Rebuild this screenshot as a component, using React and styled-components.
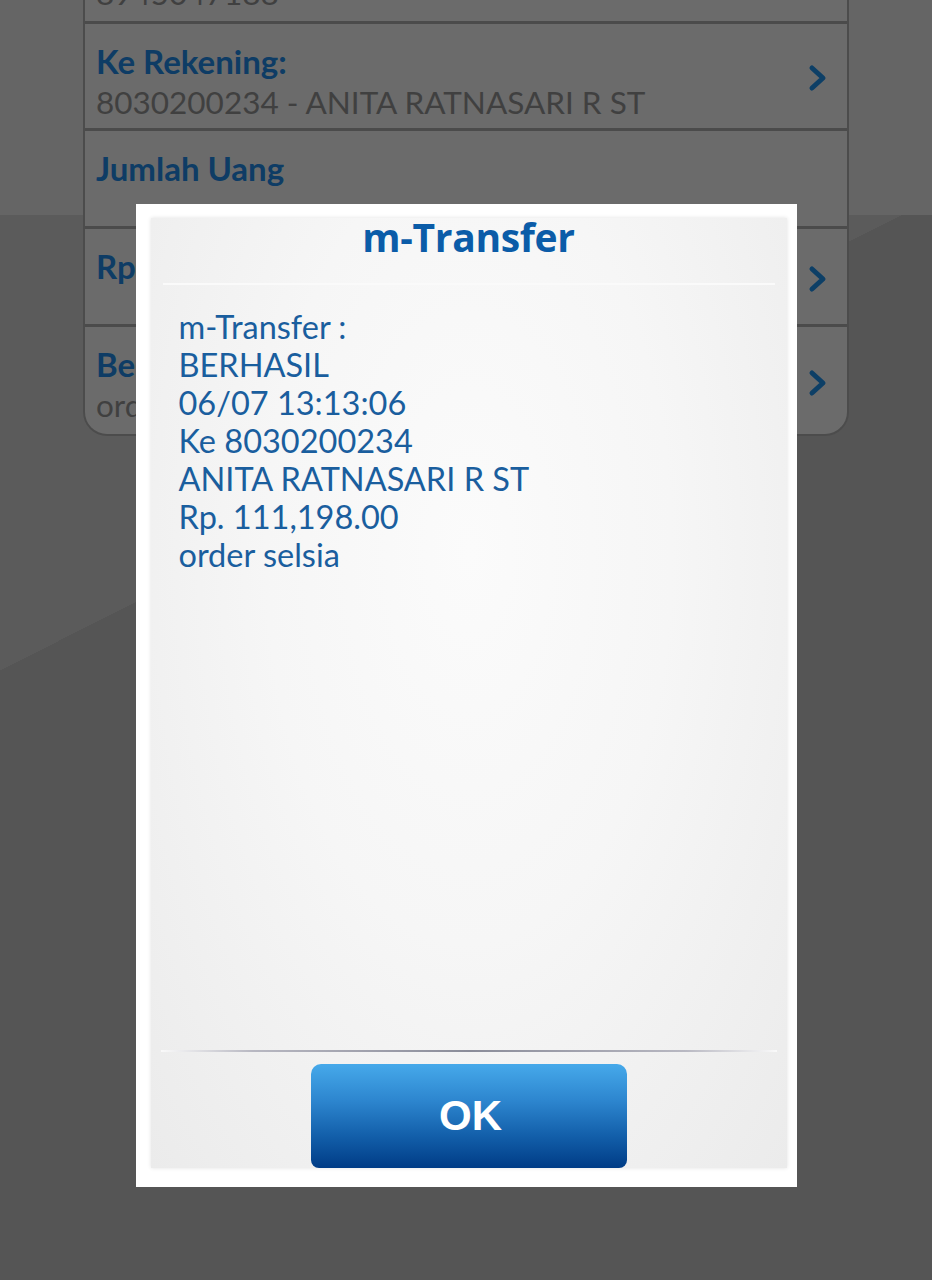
import React from 'react'
import styled, { createGlobalStyle } from 'styled-components'

const GlobalStyle = createGlobalStyle`
  html, body {
    margin: 0;
    padding: 0;
  }
  body {
    font-family: "Lato", "Liberation Sans", sans-serif;
  }
`

// baris form yang ada di belakang dialog
const rows = [
  { value: '8945047188', height: 106, top: true },
  { label: 'Ke Rekening:', value: '8030200234 - ANITA RATNASARI R ST', height: 107, arrow: true },
  { label: 'Jumlah Uang', height: 98 },
  { label: 'Rp', height: 98, arrow: true },
  { label: 'Berita', value: 'order selsia', height: 107, arrow: true, last: true },
]

const lines = [
  'm-Transfer :',
  'BERHASIL',
  '06/07 13:13:06',
  'Ke 8030200234',
  'ANITA RATNASARI R ST',
  'Rp. 111,198.00',
  'order selsia',
]

const Chevron = () => (
  <svg width="22" height="30" viewBox="0 0 22 30">
    <path d="M5 5 L16 15 L5 25" fill="none" stroke="#2196f3" strokeWidth="5" strokeLinecap="round" strokeLinejoin="round" />
  </svg>
)

const App = () => {
  return (
    <>
      <GlobalStyle />
      <Screen>
        <Card>
          {rows.map((r, i) => (
            <Row key={i} $h={r.height} $last={r.last} $top={r.top}>
              <RowText>
                {r.label && <Label>{r.label}</Label>}
                {r.value && <Value>{r.value}</Value>}
              </RowText>
              {r.arrow && <Arrow><Chevron /></Arrow>}
            </Row>
          ))}
        </Card>

        <Overlay>
          <Frame>
            <Panel>
              <Title>m-Transfer</Title>
              <Body>
                {lines.map((l, i) => (
                  <Line key={i}>{l}</Line>
                ))}
              </Body>
              <Footer>
                <OkButton>OK</OkButton>
              </Footer>
            </Panel>
          </Frame>
        </Overlay>
      </Screen>
    </>
  )
}

export default App

const Screen = styled.div`
  position: relative;
  width: 932px;
  height: 1280px;
  overflow: hidden;
  background:
    linear-gradient(180deg, #f0f0f0 0 215px, transparent 215px 100%),
    linear-gradient(153.2deg, #dadada 0 38.3%, #cacaca 38.3% 100%);
  padding: 0 83px;
  box-sizing: border-box;
`

const Card = styled.div`
  margin-top: -82px;
  background: #ffffff;
  border: 2px solid #b5b5b5;
  border-top: none;
  border-radius: 0 0 24px 24px;
  display: flex;
  flex-direction: column;
`

const Row = styled.div`
  height: ${p => p.$h}px;
  box-sizing: border-box;
  display: flex;
  justify-content: space-between;
  padding: ${p => (p.$top ? '0 18px 9px 11px' : '18px 18px 0 11px')};
  border-bottom: ${p => (p.$last ? 'none' : '3px solid #b3b3b3')};
  align-items: ${p => (p.$top ? 'flex-end' : 'flex-start')};
`

const RowText = styled.div`
  display: flex;
  flex-direction: column;
  gap: 3px;
`

const Arrow = styled.div`
  align-self: center;
  margin-top: -14px;
  display: flex;
`

const Label = styled.div`
  font-family: "Lato", sans-serif;
  font-weight: 700;
  font-size: 33px;
  line-height: 38px;
  color: #2290f0;
`

const Value = styled.div`
  font-family: "Lato", sans-serif;
  font-size: 31.5px;
  line-height: 38px;
  color: #9a9a9a;
`

const Overlay = styled.div`
  position: absolute;
  inset: 0;
  background: rgba(0, 0, 0, 0.58);
  display: flex;
  justify-content: center;
  align-items: flex-start;
  padding-top: 204px;
  box-sizing: border-box;
`

const Frame = styled.div`
  width: 661px;
  height: 983px;
  box-sizing: border-box;
  background: #ffffff;
  padding: 14px 10px 19px 15px;
  display: flex;
`

const Panel = styled.div`
  flex: 1;
  display: flex;
  flex-direction: column;
  background: radial-gradient(ellipse at 50% 35%, #fbfbfb 0%, #f6f6f6 45%, #ebebeb 100%);
  box-shadow: 0 0 4px rgba(0, 0, 0, 0.12);
`

const Title = styled.div`
  height: 67px;
  box-sizing: border-box;
  padding-top: 0;
  text-align: center;
  font-family: "Open Sans", sans-serif;
  font-weight: 700;
  font-size: 39px;
  line-height: 38px;
  letter-spacing: -0.3px;
  color: #0b5ca8;
  border-bottom: 2px solid #fafafa;
  margin: 0 12px;
`

const Body = styled.div`
  flex: 1;
  padding: 23px 0 0 28px;
`

const Line = styled.div`
  font-family: "Lato", sans-serif;
  font-size: 32.5px;
  line-height: 38px;
  color: #1a5e9e;
`

const Footer = styled.div`
  display: flex;
  justify-content: center;
  padding-top: 12px;
  margin: 0 10px;
  border-top: 2px solid;
  border-image: linear-gradient(90deg, #fafafa 0%, #b8b8c2 15%, #8a8c99 50%, #b8b8c2 85%, #fafafa 100%) 1;
`

const OkButton = styled.div`
  width: 316px;
  height: 104px;
  box-sizing: border-box;
  padding-left: 4px;
  border-radius: 10px 10px 8px 8px;
  background: linear-gradient(180deg, #46a9ea 0%, #2d86cf 35%, #125ea9 70%, #003c86 100%);
  display: flex;
  align-items: center;
  justify-content: center;
  font-family: "Liberation Sans", sans-serif;
  font-weight: 700;
  font-size: 42px;
  color: #ffffff;
`
